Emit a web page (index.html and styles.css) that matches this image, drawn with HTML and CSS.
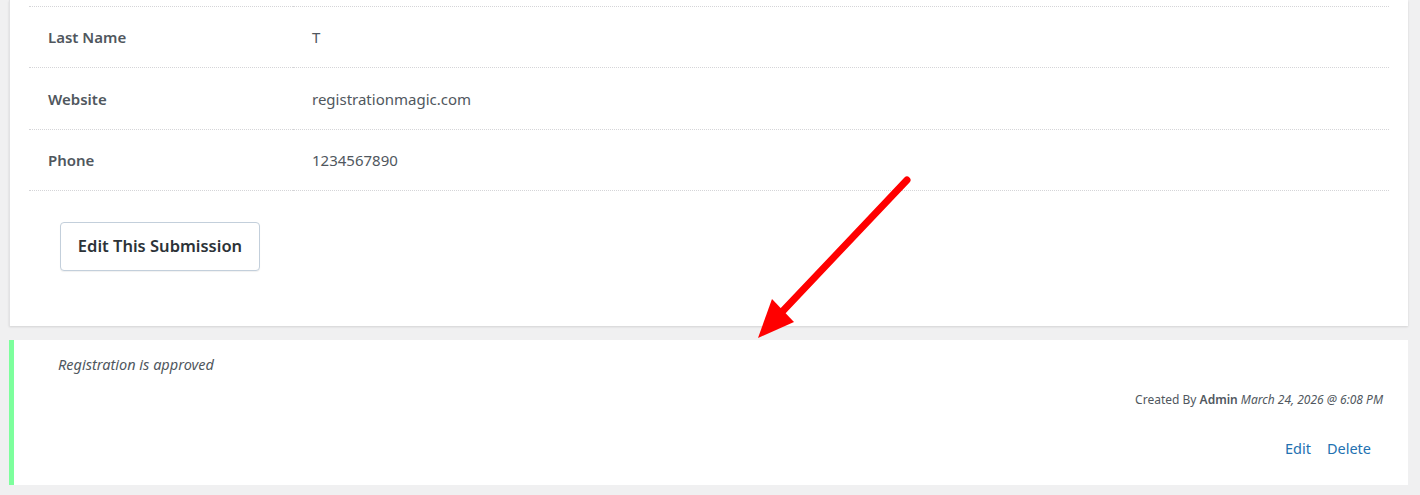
FILE: index.html
```html
<!DOCTYPE html>
<html lang="en">
  <head>
    <meta charset="utf-8" />
    <title>Submission details</title>
    <link rel="stylesheet" href="styles.css">
  </head>
  <body>
    <div class="page">
      <div class="card">
        <table class="fields">
          <tr><th>Last Name</th><td>T</td></tr>
          <tr><th>Website</th><td>registrationmagic.com</td></tr>
          <tr><th>Phone</th><td>1234567890</td></tr>
        </table>
        <div class="actions">
          <button type="button" class="btn">Edit This Submission</button>
        </div>
      </div>
      <div class="note">
        <p class="note-text">Registration is approved</p>
        <div class="note-meta">Created By <b>Admin</b> <i>March 24, 2026 @ 6:08 PM</i></div>
        <div class="note-links">
          <a href="#">Edit</a>
          <a href="#">Delete</a>
        </div>
      </div>
    </div>
    <!-- annotation arrow -->
    <svg class="arrow" width="1420" height="495" viewBox="0 0 1420 495">
      <line x1="907" y1="180" x2="780" y2="314" stroke="#ff0000" stroke-width="7" stroke-linecap="round"/>
      <polygon points="758,338 772,299 794,322" fill="#ff0000"/>
    </svg>
  </body>
</html>
```

FILE: styles.css
```css
html, body {
  margin: 0;
  padding: 0;
}
body {
  background: #f0f0f1;
  font-family: "Noto Sans", "Open Sans", sans-serif;
  color: #50575e;
  position: relative;
}
.page {
  padding: 0 12px 0 9px;
}
.card {
  background: #fff;
  border-left: 1px solid #e2e2e4;
  box-shadow: 0 1px 2px rgba(0, 0, 0, 0.12);
  padding: 6px 19px 55px 19px;
}
.fields {
  width: 100%;
  border-collapse: collapse;
}
.fields th,
.fields td {
  border-top: 1px dotted #d5d5d8;
  border-bottom: 1px dotted #d5d5d8;
  height: 60.4px;
  padding: 0 19px;
  font-size: 15px;
  text-align: left;
  vertical-align: middle;
}
.fields th {
  width: 226px;
  font-weight: 600;
  color: #50575e;
}
.fields td {
  color: #50575e;
}
.actions {
  padding: 31px 0 0 31px;
}
.btn {
  width: 200px;
  height: 49px;
  background: #fff;
  border: 1px solid #c3cfdb;
  border-radius: 4px;
  font-family: inherit;
  font-size: 16.5px;
  font-weight: 600;
  color: #2c3338;
  padding: 0 0 2px;
  box-shadow: 0 1px 1px rgba(0, 0, 0, 0.06);
}
.note {
  margin-top: 14px;
  background: #fff;
  border-left: 5px solid #7dff9d;
  height: 145px;
  box-sizing: border-box;
  padding: 14px 25px 0 44px;
}
.note-text {
  margin: 0;
  font-size: 14.5px;
  font-style: italic;
  color: #50575e;
  line-height: 20px;
}
.note-meta {
  margin-top: 18px;
  text-align: right;
  font-size: 12px;
  color: #50575e;
  line-height: 16px;
}
.note-meta b {
  font-weight: 600;
}
.note-links {
  margin-top: 30px;
  padding-right: 12px;
  display: flex;
  justify-content: flex-end;
  gap: 16px;
  font-size: 14.5px;
  line-height: 20px;
}
.note-links a {
  color: #2271b1;
  text-decoration: none;
}
.arrow {
  position: absolute;
  left: 0;
  top: 0;
  pointer-events: none;
}
```
